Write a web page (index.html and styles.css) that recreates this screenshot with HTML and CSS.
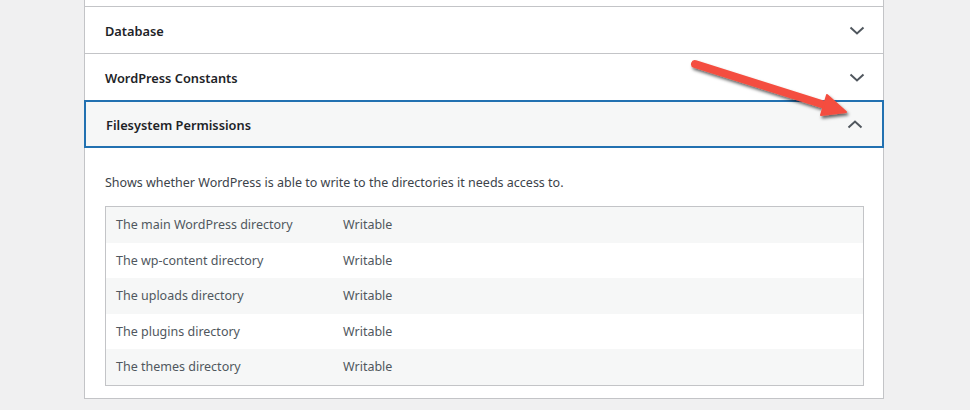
FILE: index.html
```html
<!DOCTYPE html>
<html>
<head>
<meta charset="utf-8">
<link rel="stylesheet" href="styles.css">
</head>
<body>
<div class="page">
  <div class="panel">
    <div class="stub"></div>
    <div class="item">
      <span class="title">Database</span>
      <svg class="chev" width="16" height="9" viewBox="0 0 16 9"><polyline points="1.5,1.5 8,7.5 14.5,1.5" fill="none" stroke="#50575e" stroke-width="2"/></svg>
    </div>
    <div class="item">
      <span class="title">WordPress Constants</span>
      <svg class="chev" width="16" height="9" viewBox="0 0 16 9"><polyline points="1.5,1.5 8,7.5 14.5,1.5" fill="none" stroke="#50575e" stroke-width="2"/></svg>
    </div>
    <div class="item open">
      <span class="title">Filesystem Permissions</span>
      <svg class="chev" width="16" height="9" viewBox="0 0 16 9"><polyline points="1.5,7.5 8,1.5 14.5,7.5" fill="none" stroke="#50575e" stroke-width="2"/></svg>
    </div>
    <div class="content">
      <p class="desc">Shows whether WordPress is able to write to the directories it needs access to.</p>
      <table class="info">
        <tr><td class="k">The main WordPress directory</td><td>Writable</td></tr>
        <tr><td class="k">The wp-content directory</td><td>Writable</td></tr>
        <tr><td class="k">The uploads directory</td><td>Writable</td></tr>
        <tr><td class="k">The plugins directory</td><td>Writable</td></tr>
        <tr><td class="k">The themes directory</td><td>Writable</td></tr>
      </table>
    </div>
  </div>
  <svg class="arrow" width="970" height="410" viewBox="0 0 970 410">
    <defs>
      <filter id="sh" x="-20%" y="-20%" width="140%" height="160%">
        <feDropShadow dx="1.5" dy="2.5" stdDeviation="1.5" flood-color="#000" flood-opacity="0.6"/>
      </filter>
    </defs>
    <g filter="url(#sh)" fill="#f44e3f" stroke="#f44e3f">
      <line x1="695" y1="64" x2="828" y2="106" stroke-width="8" stroke-linecap="round"/>
      <polygon points="846,112 827,95 821,115" stroke-width="2" stroke-linejoin="round"/>
    </g>
  </svg>
</div>
</body>
</html>
```
FILE: styles.css
```css
html, body {
  margin: 0;
  padding: 0;
}
body {
  background: #f0f0f1;
  font-family: "Noto Sans", "Open Sans", sans-serif;
  color: #3c434a;
  font-size: 12.5px;
}
.page {
  position: relative;
  width: 970px;
  height: 410px;
  overflow: hidden;
}
.panel {
  margin-left: 84px;
  width: 798px;
  background: #fff;
  border: 1px solid #c3c4c7;
  border-top: none;
}
.stub {
  height: 6px;
}
.item {
  box-sizing: border-box;
  height: 47px;
  border-top: 1px solid #c3c4c7;
  display: flex;
  align-items: center;
  justify-content: space-between;
  padding: 2px 18px 0 20px;
  color: #1d2327;
}
.chev {
  display: block;
  margin-top: -2px;
}
.title {
  font-size: 12.8px;
  font-weight: 600;
}
.item.open {
  background: #f6f7f7;
  border: 2px solid #2271b1;
  height: 48px;
  margin: 0 -1px;
  padding: 2px 19px 0 20px;
}
.content {
  padding: 25px 19px 12px 20px;
}
.desc {
  margin: 0 0 13px;
  line-height: 20px;
  color: #3c434a;
}
.info {
  width: 100%;
  border: 1px solid #c3c4c7;
  border-collapse: collapse;
}
.info td {
  padding: 8px 10px;
  line-height: 19.5px;
  color: #50575e;
}
.info td.k {
  width: 207px;
}
.info tr:nth-child(odd) {
  background: #f6f7f7;
}
.arrow {
  position: absolute;
  left: 0;
  top: 0;
  pointer-events: none;
}
```
